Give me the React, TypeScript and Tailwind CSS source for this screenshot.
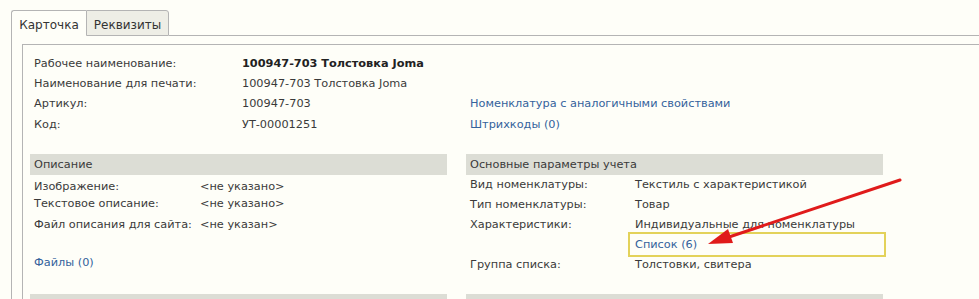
const font = { fontFamily: '"DejaVu Sans", Verdana, sans-serif' };

function Row({ label, value, bold }: { label: string; value: string; bold?: boolean }) {
  return (
    <div className="flex h-[20px] items-center">
      <div className="w-[208px]">{label}</div>
      <div className={bold ? 'font-bold text-[#222]' : ''}>{value}</div>
    </div>
  );
}

function SectionHeader({ title }: { title: string }) {
  return <div className="flex h-[21px] items-center bg-[#dcddd5] pl-[4px] pt-[2px]">{title}</div>;
}

export default function App() {
  return (
    <div
      className="relative h-[299px] w-[979px] overflow-hidden whitespace-nowrap bg-[#fefef8] pl-[11px] pt-[10px] text-[11.3px] text-[#3a3a3a]"
      style={font}
    >
      {/* Вкладки */}
      <div className="flex h-[26px]">
        <div className="flex w-[75px] items-center justify-center rounded-tl-[3px] border-l border-t border-[#b4b4b4] bg-[#fefef8] pt-[3px] text-[12px] text-[#333]">
          Карточка
        </div>
        <div className="flex w-[83px] items-center justify-center rounded-tr-[3px] border-b border-l border-r border-t border-[#b4b4b4] bg-[#eeeee6] pt-[3px] text-[12px] text-[#333]">
          Реквизиты
        </div>
        <div className="flex-1 border-b border-[#b4b4b4]" />
      </div>

      {/* Панель вкладки */}
      <div className="h-full border-l border-[#b4b4b4] pl-[10px] pt-[8px]">
        <div className="h-full border-l border-t border-[#b4b4b4] pl-[7px] pt-[9px]">
          {/* Шапка */}
          <div className="flex pl-[4px]">
            <div className="w-[436px]">
              <Row label="Рабочее наименование:" value="100947-703 Толстовка Joma" bold />
              <Row label="Наименование для печати:" value="100947-703 Толстовка Joma" />
              <Row label="Артикул:" value="100947-703" />
              <div className="flex h-[20px] items-center pt-[2px]">
                <div className="w-[208px]">Код:</div>
                <div>УТ-00001251</div>
              </div>
            </div>
            <div className="pt-[40px] text-[#34629c]">
              <div className="flex h-[20px] items-center">Номенклатура с аналогичными свойствами</div>
              <div className="flex h-[20px] items-center pt-[2px]">Штрихкоды (0)</div>
            </div>
          </div>

          {/* Группы */}
          <div className="mt-[20px] grid w-[853px] grid-cols-2 gap-x-[19px]">
            <div>
              <SectionHeader title="Описание" />
              <div className="mt-[3px] pl-[4px]">
                <div className="flex h-[18px] items-center">
                  <div className="w-[166px]">Изображение:</div>
                  <div>&lt;не указано&gt;</div>
                </div>
                <div className="flex h-[17px] items-center">
                  <div className="w-[166px]">Текстовое описание:</div>
                  <div>&lt;не указано&gt;</div>
                </div>
                <div className="flex h-[22px] items-center pt-[3px]">
                  <div className="w-[166px]">Файл описания для сайта:</div>
                  <div>&lt;не указан&gt;</div>
                </div>
                <div className="mt-[18px] flex h-[20px] items-center text-[#34629c]">Файлы (0)</div>
              </div>
              <div className="mt-[21px] h-[21px] bg-[#dcddd5]" />
            </div>

            <div>
              <SectionHeader title="Основные параметры учета" />
              <div className="mt-[1px] pl-[4px]">
                <div className="flex h-[19px] items-center">
                  <div className="w-[165px]">Вид номенклатуры:</div>
                  <div>Текстиль с характеристикой</div>
                </div>
                <div className="flex h-[20px] items-center">
                  <div className="w-[165px]">Тип номенклатуры:</div>
                  <div>Товар</div>
                </div>
                <div className="flex h-[20px] items-center">
                  <div className="w-[165px]">Характеристики:</div>
                  <div>Индивидуальные для номенклатуры</div>
                </div>
                <div className="flex h-[20px] items-center">
                  <div className="w-[165px]" />
                  <div className="relative text-[#34629c]">
                    Список (6)
                    <div className="absolute left-[-7px] top-[-5px] h-[25px] w-[258px] border-2 border-[#e3d25a]" />
                  </div>
                </div>
                <div className="flex h-[20px] items-center">
                  <div className="w-[165px]">Группа списка:</div>
                  <div>Толстовки, свитера</div>
                </div>
              </div>
              <div className="mt-[19px] h-[21px] bg-[#dcddd5]" />
            </div>
          </div>
        </div>
      </div>

      {/* Стрелка-пометка */}
      <svg className="absolute left-0 top-0" width="979" height="299" viewBox="0 0 979 299">
        <line x1="900" y1="180" x2="726" y2="238" stroke="#e01b1b" strokeWidth="3" strokeLinecap="round" />
        <polygon points="708,244 728,229 733,243" fill="#e01b1b" />
      </svg>
    </div>
  );
}
